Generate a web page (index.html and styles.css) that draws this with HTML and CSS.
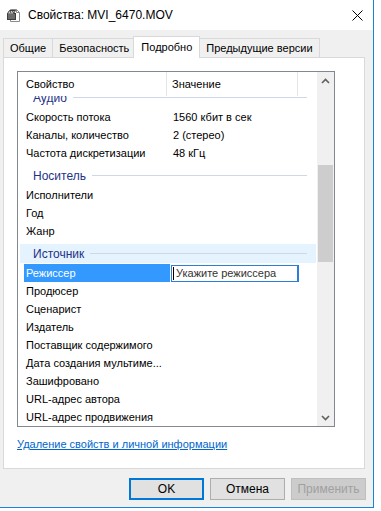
FILE: index.html
```html
<!DOCTYPE html>
<html lang="ru">
<head>
  <meta charset="UTF-8">
  <title>Свойства: MVI_6470.MOV</title>
  <link rel="stylesheet" href="styles.css">
</head>
<body>
  <div class="window">
    <div class="titlebar">
      <svg class="title-icon" width="14" height="14" viewBox="0 0 14 14">
        <path d="M3.5 1.5h6l3 3v9h-9z" fill="#fff" stroke="#8a8a8a"/>
        <path d="M9.5 1.5v3h3" fill="none" stroke="#8a8a8a"/>
        <rect x="0.5" y="5.5" width="8" height="6" fill="#6b6b6b" stroke="#3c3c3c"/>
        <path d="M0.5 5.5l2-3h6l-2 3" fill="#d6d6d6" stroke="#3c3c3c"/>
        <path d="M3 3l1 2M5.5 3l1 2" stroke="#3c3c3c"/>
      </svg>
      <span class="title">Свойства: MVI_6470.MOV</span>
      <svg class="close-btn" width="11" height="11" viewBox="0 0 11 11">
        <path d="M0.5 0.5l10 10M10.5 0.5l-10 10" stroke="#000" stroke-width="1"/>
      </svg>
    </div>

    <div class="tabs">
      <div class="tab">Общие</div>
      <div class="tab">Безопасность</div>
      <div class="tab active">Подробно</div>
      <div class="tab">Предыдущие версии</div>
    </div>

    <div class="panel">
      <div class="listview">
        <div class="list-main">
          <div class="list-header">
            <div class="col col-name">Свойство</div>
            <div class="col col-value">Значение</div>
            <div class="col col-rest"></div>
          </div>
          <div class="list-body">
            <div class="list-content">
              <div class="group"><span class="group-label">Аудио</span><span class="group-line"></span></div>
              <div class="row"><span class="cell-name">Скорость потока</span><span class="cell-value">1560 кбит в сек</span></div>
              <div class="row"><span class="cell-name">Каналы, количество</span><span class="cell-value">2 (стерео)</span></div>
              <div class="row"><span class="cell-name">Частота дискретизации</span><span class="cell-value">48 кГц</span></div>

              <div class="group"><span class="group-label">Носитель</span><span class="group-line"></span></div>
              <div class="row"><span class="cell-name">Исполнители</span></div>
              <div class="row"><span class="cell-name">Год</span></div>
              <div class="row"><span class="cell-name">Жанр</span></div>

              <div class="group hover"><span class="group-label">Источник</span><span class="group-line"></span></div>
              <div class="row selected">
                <span class="cell-name">Режиссер</span>
                <span class="edit-box"><span class="caret"></span>Укажите режиссера</span>
              </div>
              <div class="row"><span class="cell-name">Продюсер</span></div>
              <div class="row"><span class="cell-name">Сценарист</span></div>
              <div class="row"><span class="cell-name">Издатель</span></div>
              <div class="row"><span class="cell-name">Поставщик содержимого</span></div>
              <div class="row"><span class="cell-name">Дата создания мультиме...</span></div>
              <div class="row"><span class="cell-name">Зашифровано</span></div>
              <div class="row"><span class="cell-name">URL-адрес автора</span></div>
              <div class="row"><span class="cell-name">URL-адрес продвижения</span></div>
            </div>
          </div>
        </div>
        <div class="scrollbar">
          <div class="scroll-arrow">
            <svg width="9" height="6" viewBox="0 0 9 6"><path d="M1 5l3.5-3.5L8 5" fill="none" stroke="#606060" stroke-width="1.6"/></svg>
          </div>
          <div class="scroll-track"><div class="scroll-thumb"></div></div>
          <div class="scroll-arrow">
            <svg width="9" height="6" viewBox="0 0 9 6"><path d="M1 1l3.5 3.5L8 1" fill="none" stroke="#606060" stroke-width="1.6"/></svg>
          </div>
        </div>
      </div>

      <a href="#" class="remove-link">Удаление свойств и личной информации</a>
    </div>

    <div class="buttons">
      <button class="btn default-btn">OK</button>
      <button class="btn">Отмена</button>
      <button class="btn" disabled>Применить</button>
    </div>
  </div>
</body>
</html>
```

FILE: styles.css
```css
* {
  margin: 0;
  padding: 0;
  box-sizing: border-box;
}

body {
  background: #fff;
  font-family: "Liberation Sans", Arial, sans-serif;
  font-size: 11px;
  color: #000;
}

.window {
  width: 374px;
  height: 508px;
  background: #f0f0f0;
  border-right: 1px solid #1883d7;
  border-bottom: 1px solid #1883d7;
}

/* title bar */

.titlebar {
  height: 30px;
  background: #fff;
  display: flex;
  align-items: center;
  padding-left: 7px;
}

.title-icon {
  margin-right: 7px;
}

.title {
  font-size: 12px;
}

.close-btn {
  margin-left: auto;
  margin-right: 10px;
}

/* tabs */

.tabs {
  display: flex;
  align-items: flex-end;
  height: 27px;
  padding-left: 3px;
  position: relative;
  z-index: 1;
}

.tab {
  height: 19px;
  padding: 0 6px;
  line-height: 18px;
  background: #f0f0f0;
  border: 1px solid #d9d9d9;
  border-bottom: none;
  margin-right: -1px;
}

.tab.active {
  height: 22px;
  background: #fff;
  margin: 0 -1px -1px -2px;
  padding: 0 7px;
  line-height: 20px;
}

/* panel */

.panel {
  height: 412px;
  margin: 0 8px 0 3px;
  background: #fff;
  border: 1px solid #d9d9d9;
  padding: 13px 0 0 13px;
}

.listview {
  width: 318px;
  height: 356px;
  border: 1px solid #828790;
  display: flex;
}

.list-main {
  width: 299px;
  display: flex;
  flex-direction: column;
}

.list-header {
  display: flex;
  height: 24px;
}

.col {
  line-height: 24px;
  border-right: 1px solid #e5e5e5;
}

.col-name {
  width: 149px;
  padding-left: 8px;
}

.col-value {
  width: 131px;
  padding-left: 5px;
}

.col-rest {
  flex: 1;
  border-right: none;
}

.list-body {
  flex: 1;
  overflow: hidden;
}

.list-content {
  margin-top: -12px;
}

.group {
  display: flex;
  align-items: center;
  height: 19px;
  margin: 4px 1px 1px 2px;
  padding: 0 9px 0 13px;
  color: #1e3287;
  font-size: 12px;
}

.group.hover {
  background: #e5f3ff;
}

.group-line {
  flex: 1;
  height: 1px;
  margin-left: 6px;
  background: #cfd8e6;
}

.row {
  display: flex;
  align-items: center;
  height: 18px;
  padding-left: 6px;
}

.cell-name {
  width: 143px;
  padding-left: 2px;
  line-height: 18px;
  white-space: nowrap;
}

.cell-value {
  padding-left: 6px;
}

.row.selected .cell-name {
  width: 146px;
  background: #3399ff;
  color: #fff;
}

.edit-box {
  display: flex;
  align-items: center;
  width: 128px;
  height: 17px;
  margin-left: 1px;
  border: 1px solid #2b7fd8;
  border-right-width: 2px;
  color: #333;
  padding-left: 1px;
}

.caret {
  width: 1px;
  height: 13px;
  background: #000;
  margin-right: 2px;
}

/* scrollbar */

.scrollbar {
  width: 17px;
  background: #f0f0f0;
  display: flex;
  flex-direction: column;
}

.scroll-arrow {
  height: 17px;
  display: flex;
  align-items: center;
  justify-content: center;
}

.scroll-track {
  flex: 1;
  padding-top: 76px;
}

.scroll-thumb {
  height: 97px;
  margin: 0 1px;
  background: #cdcdcd;
}

.remove-link {
  display: inline-block;
  margin-top: 11px;
  color: #0066cc;
  text-decoration: underline;
}

/* buttons */

.buttons {
  display: flex;
  justify-content: flex-end;
  gap: 6px;
  padding: 9px 7px 0 0;
}

.btn {
  width: 75px;
  height: 22px;
  background: #e1e1e1;
  border: 1px solid #adadad;
  font-family: inherit;
  font-size: 12px;
  color: #000;
}

.default-btn {
  border: 2px solid #0078d7;
}

.btn:disabled {
  background: #cccccc;
  border-color: #bfbfbf;
  color: #a0a0a0;
}
```
